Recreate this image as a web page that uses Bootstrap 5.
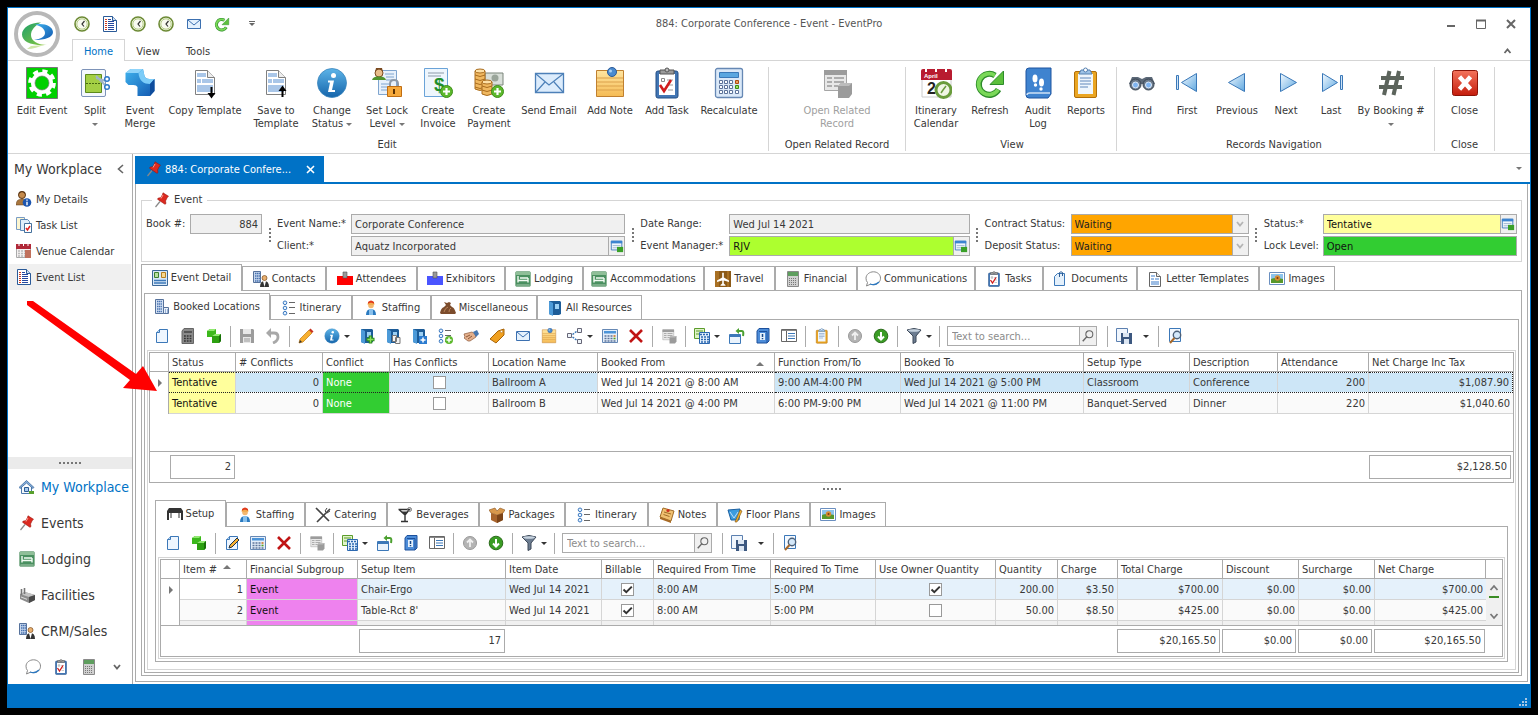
<!DOCTYPE html>
<html lang="en">
<head>
<meta charset="utf-8">
<meta name="viewport" content="width=device-width, initial-scale=1">
<title>884: Corporate Conference - Event - EventPro</title>
<link rel="stylesheet" href="https://cdn.jsdelivr.net/npm/bootstrap@5.3.0/dist/css/bootstrap.min.css">
<style>
:root{--ep-blue:#0072c6;--ep-line:#ababab;--ep-soft:#d5d5d5;--ep-text:#383838}
body{background:#000;font-family:"DejaVu Sans Condensed","Noto Sans",sans-serif;font-size:11px;line-height:13px;color:var(--ep-text);min-height:100vh;padding:7px;display:flex}
button{background:none;border:0;padding:0;color:inherit;font:inherit}
svg{display:block;flex:none}
a{color:inherit;text-decoration:none}
.ic{width:16px;height:16px}
.ic-big{width:32px;height:32px}
.app{border:1px solid var(--ep-blue);background:#fff;min-width:0}
.dots{display:flex;gap:2px;align-items:center;justify-content:center}
.dots i{width:2px;height:2px;background:#777}
.caret{display:inline-block;border:3px solid transparent;border-top-color:#777;border-bottom:0;vertical-align:middle}

/* title bar and ribbon */
.app-head{border-bottom:1px solid var(--ep-soft)}
.logo-cell{width:60px;padding:3px 0 0 6px}
.title-row{height:31px;display:grid;grid-template-columns:1fr auto 1fr;align-items:center}
.app-title{margin-right:60px;color:#555}
.quick button{width:28px;height:24px;display:flex;align-items:center;justify-content:center}
.quick button:last-child{width:32px}
.win button{width:30px;height:24px;display:flex;align-items:center;justify-content:center}
.tab-row{height:21px;margin-left:4px}
.tab-row button{padding:3px 0 0;width:46px;height:21px}
.tab-row .home{width:53px;height:22px;padding-top:2px;border:1px solid var(--ep-soft);border-bottom:0;background:#fff;color:var(--ep-blue)}
.tab-row .tools{width:54px}
.ribbon{height:93px;border-bottom:1px solid var(--ep-soft)}
.rgroup{margin:6px 0 2px;border-right:1px solid var(--ep-soft)}
.rbtns{display:grid;height:71px}
.rbtns button{display:flex;flex-direction:column;align-items:center;white-space:nowrap}
.rbtns button span{padding-top:5px;text-align:center}
.rbtns button:disabled{color:#a0a0a0}
.rcap{text-align:center}
.g-edit{padding:0 7px 0 5px}
.g-edit .rbtns{grid-template-columns:58px 48px 42px 88px 54px 58px 52px 50px 52px 68px 54px 60px 64px}
.g-open .rbtns{grid-template-columns:136px}
.g-view{padding:0 2px 0 4px}
.g-view .rbtns{grid-template-columns:52px 56px 40px 56px}
.g-nav{padding:0 6px 0 3px}
.g-nav .rbtns{grid-template-columns:44px 46px 54px 44px 46px 74px}
.g-close .rbtns{grid-template-columns:59px}

/* left navigation */
.side{width:125px;border-right:1px solid var(--ep-line);flex:none}
.side-title{height:30px;margin-bottom:2px;padding:0 8px 0 6px;font-size:14px}
.side-item{height:26px;padding-left:7px;margin:0 1px;gap:4px}
.side-item.active{background:#f0f0f0}
.side-split{height:12px;background:#ebebeb}
.side-nav{height:36px;padding-left:11px;gap:6px;font-size:14px;white-space:nowrap}
.side-nav.active{color:var(--ep-blue)}
.side-foot{height:35px;padding-left:17px;gap:12px}

/* document area */
.doc-tab{width:189px;height:26px;background:var(--ep-blue);color:#fff;margin-top:2px;padding:0 9px 0 11px;gap:3px}
.doc-strip{border-bottom:2px solid var(--ep-blue);margin-right:-2px}
.doc{margin:0 2px 2px;min-width:0}
.pane{border:1px solid var(--ep-line);border-top:0;padding:7px 5px 5px}
.evt{border:1px solid var(--ep-soft);padding:0 4px 5px;margin-bottom:2px;min-width:0}
.evt legend{float:none;width:auto;font-size:11px;line-height:18px;height:18px;margin:0 0 5px 6px;padding:0 5px 0 2px;display:flex;align-items:center;gap:4px}
.fields{display:grid;grid-template-columns:44px 72fr 15px 74px 274fr 15px 89px 240fr 15px 86px 178fr 15px 59px 194fr;grid-template-rows:20px 20px;row-gap:2px}
.fields label{line-height:20px;white-space:nowrap}
.fields .vdots{grid-row:1 / 3;display:flex;flex-direction:column;gap:2px;align-items:center;justify-content:center}
.fields .at-3{grid-column:3}
.fields .at-6{grid-column:6}
.fields .at-9{grid-column:9}
.fields .at-12{grid-column:12}
.vdots i{width:2px;height:2px;background:#777}
.fbox{display:flex;border:1px solid var(--ep-line);background:#f0f0f0;min-width:0}
.fbox input,.fbox select{border:0;background:none;flex:1 1 0;min-width:0;width:100%;padding:0 3px;font:inherit;color:inherit;appearance:none;outline:0}
.fbox button{width:16px;border-left:1px solid var(--ep-line);background:#f0f0f0;display:flex;align-items:center;justify-content:center;flex:none}
.bg-wait{background:#ffa500;color:#222}
.bg-rjv{background:#adff2f;color:#111}
.bg-tent{background:#ffff9c;color:#111}
.bg-open{background:#32cd32;color:#111}

.tabs{display:grid;height:26px;align-items:end}
.tabs button{height:24px;border:1px solid var(--ep-line);border-bottom:0;display:flex;align-items:center;justify-content:center;gap:3px;white-space:nowrap;background:#fff}
.tabs button.active{height:27px;margin-bottom:-1px;padding-bottom:1px;z-index:1}
.tabs-1{grid-template-columns:101px 84px 91px 88px 78px 121px 71px 82px 118px 68px 94px 122px 76px}
.tabs-2{grid-template-columns:126px 82px 79px 106px 105px}
.tabs-3{grid-template-columns:71px 79px 82px 92px 86px 83px 69px 93px 76px}
.tabs-1,.tabs-2,.tabs-3{margin-left:-1px}
.frame{border:1px solid var(--ep-line)}
.frame-soft{border:1px solid var(--ep-soft);padding:1px}
.frame-a{padding:2px}
.frame-b,.frame-c{padding:0 2px 2px}
.tabs-1,.frame-a .tabs-2,.frame-b .tabs-3{margin-left:0}
.tools-bar{height:30px;display:flex;align-items:center;padding:2px 0 0 2px}
.tools-bar button{width:26px;height:24px;display:flex;align-items:center;justify-content:center;gap:4px;flex:none}
.tools-bar .drop{width:35px}
.tools-bar .drop-only{width:18px}
.tools-bar .drop .caret,.tools-bar .drop-only .caret{border-top-color:#333}
.vsep{width:1px;height:21px;background:var(--ep-line);margin:0 3px;flex:none}
.find{width:150px;height:20px;border:1px solid var(--ep-line);display:flex;margin:0 7px 0 4px;flex:none}
.find input{border:0;padding:0 4px;font:inherit;flex:1 1 0;min-width:0;outline:0}
.find input::placeholder{color:#8c8c8c;opacity:1}
.tools-bar .find button{width:17px;height:18px;border-left:1px solid var(--ep-line);background:#f0f0f0}

/* data grids */
.dgrid{table-layout:fixed;width:100%;border-collapse:separate;border-spacing:0}
.dgrid th{height:19px;font-weight:400;padding:0 0 0 3px;border:0 solid var(--ep-line);border-width:0 1px 1px 0;white-space:nowrap;overflow:hidden}
.dgrid th:last-child,.dgrid td:last-child{border-right:0}
.dgrid td{height:21px;padding:0 3px;border:0 solid var(--ep-soft);border-width:0 1px 1px 0;white-space:nowrap;overflow:hidden}
.dgrid td:first-child{border-color:var(--ep-line);border-bottom:0;background:#fff;padding:0 0 0 8px}
.dgrid .up{display:inline-block;border:4px solid transparent;border-bottom-color:#777;border-top:0;margin:3px 10px 0 6px}
.dgrid .cur{display:block;border:4px solid transparent;border-left-color:#777;border-right:0;width:0}
.dgrid input{appearance:none;width:13px;height:13px;border:1px solid #999;background:#fff;margin:0;display:block}
.dgrid input:checked{background:#fff url("data:image/svg+xml,%3Csvg xmlns='http://www.w3.org/2000/svg' viewBox='0 0 11 11'%3E%3Cpath d='M1.500 5.500l2.800 2.700L9.800 2.600' fill='none' stroke='%23333' stroke-width='2'/%3E%3C/svg%3E")}
.dgrid .alt td:not(:first-child){background:#fafafa}
.dgrid .sel td:not(:first-child){background:#cde6f7;background-clip:padding-box;border-top:1px dotted #222;border-bottom:1px dotted #222}
.dgrid .sel td:last-child{border-right:1px dotted #222}
.dgrid .hot td:not(:first-child){background:#e5f1fb}
.dgrid .third td:not(:first-child){background:#f0f0f0}
.dgrid tr .c-tent.c-tent.c-tent{background:#ffff9c;color:#111}
.dgrid tr .c-none.c-none.c-none{background:#32cd32;color:#fff}
.dgrid tr .c-evt.c-evt.c-evt{background:#ee82ee;color:#111}
.dgrid tr .c-white.c-white.c-white{background:#fff}
.dgrid tr .scroll-cell.scroll-cell.scroll-cell{background:#f0f0f0;border:0;padding:0;vertical-align:top}
.grid-foot{height:30px;display:flex;align-items:center;border-top:1px solid var(--ep-line);box-sizing:content-box}
.grid-foot output{height:24px;border:1px solid var(--ep-line);line-height:22px;padding-right:3px;text-align:right}
.u-count{width:65px;margin-left:20px}
.u-total{width:142px;margin:0 2px 0 auto}
.l-count{width:146px;margin:0 auto 0 198px}
.l-total{width:103px}
.l-small{width:74px;margin-left:2px}
.l-net{width:111px;margin:0 17px 0 2px}
.l-body{height:65px;overflow:hidden}
.split-h{height:12px}
.lower{padding:5px 6px 6px}
.status{height:23px;background:var(--ep-blue);padding:0 3px 1px}
.arrow{position:absolute;left:25px;top:297px;width:132px;height:100px;pointer-events:none}
</style>
</head>
<body>
<svg width="0" height="0" class="position-absolute" aria-hidden="true">
<defs>
<linearGradient id="gb" x1="0" y1="0" x2="1" y2="1"><stop offset="0" stop-color="#f4faff"/><stop offset="1" stop-color="#5fa8e0"/></linearGradient>
<linearGradient id="gi" x1="0" y1="0" x2="0" y2="1"><stop offset="0" stop-color="#5db4e8"/><stop offset="1" stop-color="#1565ab"/></linearGradient>
<linearGradient id="gy" x1="0" y1="0" x2="0" y2="1"><stop offset="0" stop-color="#ffe5a0"/><stop offset="1" stop-color="#f5bb55"/></linearGradient>
<linearGradient id="gr" x1="0" y1="0" x2="0" y2="1"><stop offset="0" stop-color="#f4745c"/><stop offset="1" stop-color="#c41c0c"/></linearGradient>
<linearGradient id="gn" x1="0" y1="0" x2="1" y2="1"><stop offset="0" stop-color="#3fb3ee"/><stop offset="1" stop-color="#1258b0"/></linearGradient>
<linearGradient id="gl" x1="0" y1="0" x2="1" y2="1"><stop offset="0" stop-color="#1da06b"/><stop offset="1" stop-color="#8cc83c"/></linearGradient>
</defs>
<symbol id="gear" viewBox="0 0 32 32"><path d="M.5.500h31v31H.5z" fill="#00d000" stroke="#777"/><circle cx="16" cy="16" r="8.500" fill="none" stroke="#fff" stroke-width="5"/><circle cx="16" cy="16" r="11.800" fill="none" stroke="#fff" stroke-width="4" stroke-dasharray="5 4.270"/><circle cx="16" cy="16" r="7" fill="#00d000" stroke="#777" stroke-width=".7"/></symbol>
<symbol id="split" viewBox="0 0 32 32"><rect x="2.500" y="2.500" width="24" height="27" rx="1.500" fill="#f4f8fd" stroke="#7d93b8"/><path d="M6.500 7.500h16v18h-16z" fill="#a3cf44" stroke="#5d8a1c"/><path d="M7 16.500h15" stroke="#456a12" stroke-dasharray="2 1"/><path d="M17 9l9 9M17 11l10 3" stroke="#9fb4c8" stroke-width="2"/><circle cx="28" cy="12" r="2.300" fill="#fff" stroke="#2e78c8" stroke-width="1.500"/><circle cx="28" cy="20" r="2.300" fill="#fff" stroke="#2e78c8" stroke-width="1.500"/></symbol>
<symbol id="merge" viewBox="0 0 32 32"><path d="M1.500 6l5-4h12.500l1.500 7q1 3 5 3h5v12l-4.500 5H13.500v-9q-1-2-4-2h-5l-3-3z" fill="url(#gn)"/><path d="M1.500 6l5-4h12.500l-4.500 4z" fill="#8fd4fa"/><path d="M14.500 6l4.500-4 1.500 7q1 3 5 3h5l-4.500 5c-6 0-11-3-11.500-11z" fill="#7cccf8"/><path d="M26 17l4.500-5v12L26 29z" fill="#0e4c9c"/></symbol>
<symbol id="tpl" viewBox="0 0 32 32"><path d="M6.500 3.500h12l7 7v17h-19z" fill="#fff" stroke="#808080"/><path d="M18.500 3.500v7h7" fill="#eee" stroke="#808080"/><path d="M8 6h9v4H8zM8 12h4v4H8zM13 12h11v4H13zM8 18h16v7H8z" fill="#a9c6e8"/></symbol>
<symbol id="tpls" viewBox="0 0 16 16"><path d="M2.500 1.500h7l4 4v10h-11z" fill="#fff" stroke="#666"/><path d="M9.500 1.500v4h4" fill="#eee" stroke="#666"/><path d="M4 4h4v2H4zM4 7h3v2H4zM8 7h4v2H8zM4 10h8v4H4z" fill="#9dbde4"/></symbol>
<symbol id="copytpl" viewBox="0 0 32 32"><use href="#tpl"/><path d="M22.500 20v8" stroke="#000" stroke-width="2"/><path d="M18.500 26h8l-4 5.500z"/></symbol>
<symbol id="savetpl" viewBox="0 0 32 32"><use href="#tpl"/><path d="M22.500 22v8" stroke="#000" stroke-width="2"/><path d="M18.500 24h8l-4-5.500z"/></symbol>
<symbol id="info" viewBox="0 0 32 32"><circle cx="16" cy="16" r="14.500" fill="url(#gi)" stroke="#3c86bd" stroke-width=".8"/><circle cx="17.500" cy="8.500" r="2.500" fill="#fff"/><path d="M12 13.500h6l-2 9.500h3v2h-7l2-9.500h-2z" fill="#fff"/></symbol>
<symbol id="lock" viewBox="0 0 32 32"><path d="M7.500 3.500h18v24h-18z" fill="#e8f1fb" stroke="#7fa5cf"/><path d="M14 7h9M15 10h8M15 13h8M10 17h10M10 20h8M10 23h8" stroke="#7fa5cf" stroke-width="1"/><circle cx="8" cy="6" r="4" fill="#e8bd8a" stroke="#7a4a20"/><path d="M4 5q4-6 8 0l-1-4H5z" fill="#7a4a20"/><path d="M1 13q1-4 7-3.500 6-.5 7 3.500z" fill="#50942e"/><path d="M19 20v-3q0-4 4-4t4 4v3" fill="none" stroke="#8d99a8" stroke-width="2"/><path d="M16.500 19.500h14v10h-14z" fill="#f7a93a" stroke="#c06d12"/><path d="M23 22v5" stroke="#5c3000" stroke-width="2"/></symbol>
<symbol id="invoice" viewBox="0 0 32 32"><path d="M2.500 1.500h23v28h-23z" fill="#eef6fd" stroke="#6aa3d8"/><path d="M6 6h16M6 9h13" stroke="#8c9aa8"/><text x="12" y="24" font-family="Liberation Sans" font-size="19" font-weight="700" fill="#1f8f2a">$</text><circle cx="24.500" cy="24.500" r="6" fill="#5cb82c" stroke="#3d8f18"/><path d="M24.500 21v7M21 24.500h7" stroke="#fff" stroke-width="2.200"/></symbol>
<symbol id="payment" viewBox="0 0 32 32"><path d="M12 6h18v12H12z" fill="#d9dfd9" stroke="#7b857b"/><circle cx="22" cy="11" r="3.500" fill="#9aa59a"/><path d="M2 4v18q5 3 10 0V4z" fill="#f0b860" stroke="#a96c1e"/><path d="M2 8q5 3 10 0M2 12q5 3 10 0M2 16q5 3 10 0M2 20q5 3 10 0" fill="none" stroke="#a96c1e"/><ellipse cx="7" cy="4" rx="5" ry="2" fill="#fde0a6" stroke="#a96c1e"/><path d="M9 15v12q5 3 10 0V15z" fill="#f0b860" stroke="#a96c1e"/><path d="M9 19q5 3 10 0M9 23q5 3 10 0" fill="none" stroke="#a96c1e"/><ellipse cx="14" cy="15" rx="5" ry="2" fill="#fde0a6" stroke="#a96c1e"/><circle cx="24.500" cy="24.500" r="6" fill="#5cb82c" stroke="#3d8f18"/><path d="M24.500 21v7M21 24.500h7" stroke="#fff" stroke-width="2.200"/></symbol>
<symbol id="mail" viewBox="0 0 32 32"><path d="M2.500 6.500h28v19h-28z" fill="#dcecfc" stroke="#4d80b8" stroke-width="1.300"/><path d="M3 7l13 11L30 7M3 25l9-10M30 25l-9-10" fill="none" stroke="#4d80b8" stroke-width="1.200"/></symbol>
<symbol id="mails" viewBox="0 0 16 16"><path d="M1.500 3.500h13v9h-13z" fill="#e4f1fd" stroke="#3c70b0"/><path d="M2 4l6 5 6-5" fill="none" stroke="#3c70b0"/></symbol>
<symbol id="note" viewBox="0 0 32 32"><path d="M2.500 3.500h27v26h-27z" fill="url(#gy)" stroke="#c08030"/><path d="M3 11h26M3 15h26M3 19h26M3 23h26" stroke="#dba04a"/><circle cx="18" cy="5" r="4.500" fill="#4b8bd0" stroke="#2a5a98"/><circle cx="16.500" cy="4" r="1.500" fill="#a9d0f4"/></symbol>
<symbol id="task" viewBox="0 0 32 32"><rect x="5" y="4" width="22" height="27" rx="2" fill="#4276b4" stroke="#234f86"/><path d="M8 7h16v21H8z" fill="#fff"/><path d="M9 3h14v4H9z" fill="#9a9a9a" stroke="#555"/><circle cx="16" cy="3" r="2" fill="#bbb" stroke="#555"/><path d="M10.500 11.500h3v3h-3z" fill="none" stroke="#888"/><path d="M16 13h6M17 18h5M17 23h5" stroke="#999"/><path d="M9 18l4 6 7-11" fill="none" stroke="#d01c1c" stroke-width="2.600"/></symbol>
<symbol id="calc" viewBox="0 0 32 32"><rect x="2.500" y="1.500" width="27" height="29" rx="2" fill="#dbe9f8" stroke="#6688b4" stroke-width="1.300"/><path d="M6.500 5.500h19v5h-19z" fill="#5aa7e0" stroke="#3a79b8"/><g fill="#fff" stroke="#5c7399"><path d="M6.500 13.500h3v3h-3zM11.500 13.500h3v3h-3zM16.500 13.500h3v3h-3zM6.500 18.500h3v3h-3zM11.500 18.500h3v3h-3zM16.500 18.500h3v3h-3zM6.500 23.500h3v3h-3zM11.500 23.500h3v3h-3zM16.500 23.500h3v3h-3zM22.500 23.500h3v3h-3z"/><path d="M22.500 13.500h3v3h-3z" fill="#e8a060" stroke="#b04a10"/><path d="M22.500 18.500h3v3h-3z" fill="#a0e060" stroke="#3c8c10"/></g></symbol>
<symbol id="calcs" viewBox="0 0 16 16"><path d="M.5 1.500h15v13H.5z" fill="#e4eefa" stroke="#6688b4"/><path d="M2 3h12v2.500H2z" fill="#4c94d8"/><path d="M2.500 8h8M2.500 10.500h8M2.500 13h11" stroke="#5c7399" stroke-width="1.500" stroke-dasharray="2 1"/><path d="M11.500 7.200h2v1.600h-2z" fill="#d07020"/><path d="M11.500 9.700h2v1.600h-2z" fill="#55a01c"/></symbol>
<symbol id="openrel" viewBox="0 0 32 32"><path d="M3.500 3.500h22v20h-22z" fill="#e8e8e8" stroke="#a5a5a5"/><path d="M3 3h23v5H3z" fill="#9c9c9c"/><path d="M6 11h5M13 11h10M6 15h5M13 15h10M6 19h5M13 19h4" stroke="#999" stroke-width="1.500"/><path d="M17 19l3-3h11v11l-3 4H17z" fill="#9b9b9b"/><path d="M17 19l3-3h11l-3 3z" fill="#bcbcbc"/></symbol>
<symbol id="itincal" viewBox="0 0 32 32"><path d="M2 12h29v18H2z" fill="#fff" stroke="#ccc"/><path d="M1 4q0-2 2-2h27q2 0 2 2v9H1z" fill="#b81c30"/><path d="M6 0v5M16 0v5M26 0v5" stroke="#fff" stroke-width="2"/><text x="4" y="11" font-family="Liberation Sans" font-size="6" font-weight="700" fill="#fff">April</text><text x="7" y="27" font-family="Liberation Sans" font-size="16" font-weight="700" fill="#222">2</text><circle cx="23.500" cy="23" r="7.500" fill="#f0f6e4" stroke="#6a9c3c" stroke-width="3"/><path d="M23 23l3-4M23 23l-2 3" stroke="#6a9c3c" stroke-width="1.500"/></symbol>
<symbol id="refresh" viewBox="0 0 32 32"><path d="M24.500 22.500A10.500 10.500 0 1 1 21 8.500" fill="none" stroke="#2d8c2a" stroke-width="6"/><path d="M24 22.800A10.500 10.500 0 1 1 21 8.500" fill="none" stroke="#7ad858" stroke-width="3.800"/><path d="M29.500 4v13.500H16z" fill="#5cc03c" stroke="#2d8c2a"/></symbol>
<symbol id="audit" viewBox="0 0 32 32"><path d="M4 4q0-3 3-3h22v26l-3 4H7q-3 0-3-3z" fill="#3f83cf" stroke="#1e55a0"/><path d="M5 28q0-2 3-2h20" fill="none" stroke="#cfe2f6" stroke-width="1.500"/><ellipse cx="13" cy="11.500" rx="2.500" ry="4" fill="#fff"/><circle cx="13.500" cy="18" r="1.700" fill="#fff"/><ellipse cx="19.500" cy="15.500" rx="2.500" ry="4" fill="#fff"/><circle cx="19" cy="22" r="1.700" fill="#fff"/></symbol>
<symbol id="report" viewBox="0 0 32 32"><rect x="4.500" y="4.500" width="22" height="26" rx="1.500" fill="#eaa522" stroke="#b06e08"/><path d="M8 7h15v20H8z" fill="#eff6fd"/><path d="M9 7l2-4h9l2 4z" fill="#9ec3e8" stroke="#5580b0"/><circle cx="15.500" cy="3" r="2" fill="#fff" stroke="#5580b0"/><path d="M10 11h11M10 14h11M10 17h11M10 20h8" stroke="#6088bb"/></symbol>
<symbol id="find" viewBox="0 0 32 32"><path d="M6 10h6l4 2 4-2h6l3 7H3z" fill="#5c6978"/><circle cx="9.500" cy="17.500" r="5.500" fill="#6a7888" stroke="#394450"/><circle cx="22.500" cy="17.500" r="5.500" fill="#6a7888" stroke="#394450"/><circle cx="9.500" cy="18" r="3" fill="#7fb4f0" stroke="#e0ecfa"/><circle cx="22.500" cy="18" r="3" fill="#7fb4f0" stroke="#e0ecfa"/></symbol>
<symbol id="prev" viewBox="0 0 32 32"><path d="M7.500 15.500L23.500 6.500v18z" fill="url(#gb)" stroke="#3a78b8"/></symbol>
<symbol id="next" viewBox="0 0 32 32"><path d="M26.500 15.500L10.500 6.500v18z" fill="url(#gb)" stroke="#3a78b8"/></symbol>
<symbol id="first" viewBox="0 0 32 32"><path d="M10.500 15.500l15-9v18z" fill="url(#gb)" stroke="#3a78b8"/><path d="M5.500 8.500h2v14h-2z" fill="#cfe4f8" stroke="#3a78b8"/></symbol>
<symbol id="last" viewBox="0 0 32 32"><path d="M22.500 15.500l-15-9v18z" fill="url(#gb)" stroke="#3a78b8"/><path d="M25.500 8.500h2v14h-2z" fill="#cfe4f8" stroke="#3a78b8"/></symbol>
<symbol id="hash" viewBox="0 0 32 32"><path d="M14.500 4L9 28M24 4l-5.500 24M6 11h23M4 20h23" stroke="#5c645c" stroke-width="4" fill="none"/></symbol>
<symbol id="closex" viewBox="0 0 32 32"><rect x="3.500" y="3.500" width="25" height="25" rx="2" fill="url(#gr)" stroke="#8c1408"/><path d="M12 11.500l8 9M20 11.500l-8 9" stroke="#fff" stroke-width="4.500" stroke-linecap="square"/></symbol>

<symbol id="clock" viewBox="0 0 16 16"><circle cx="8" cy="8" r="7" fill="#f8faf0" stroke="#6c8a34" stroke-width="1.600"/><circle cx="8" cy="8" r="5.200" fill="none" stroke="#b4cc84"/><path d="M10.500 5L8 8l2 2.500" fill="none" stroke="#333" stroke-width="1.200"/></symbol>
<symbol id="doclist" viewBox="0 0 16 16"><path d="M1.500.500h9l4 4v11h-13z" fill="#fff" stroke="#2a5a98"/><path d="M10.500.500v4h4" fill="#cfe0f4" stroke="#2a5a98"/><path d="M6 3.500h3M6 5.500h6M6 7.500h6M6 9.500h6M6 11.500h6M6 13.500h6" stroke="#2448a0"/><path d="M3 3.500h2M3 5.500h2M3 7.500h2M3 9.500h2M3 11.500h2M3 13.500h2" stroke="#d03c1c"/></symbol>
<symbol id="pin" viewBox="0 0 16 16"><path d="M6 9.500L1.500 15" stroke="#888" stroke-width="1.200"/><path d="M9 .8l5.500 3.500-1.300 1.200L11.500 9l.5 2.500-1 .8L3.500 7.200l.8-1.200 2.500-.3L8.500 2.500z" fill="#dc2a20" stroke="#9c1008" stroke-width=".6"/><path d="M9 3l-2 3.500" stroke="#ff9a90"/></symbol>
<symbol id="personinfo" viewBox="0 0 16 16"><circle cx="6" cy="4" r="3.500" fill="#c48a4c" stroke="#5f3a18"/><path d="M2.500 3.500q3.500-5 7 0L9 1 6 0 3 1z" fill="#5f3a18"/><path d="M0 14q0-6 6-6t6 6z" fill="#a8763e" stroke="#5f3a18" stroke-width=".5"/><circle cx="11" cy="11.500" r="4.300" fill="#1c56b0"/><path d="M11 8.500v1.300M11 10.800v3.400" stroke="#fff" stroke-width="1.400"/></symbol>
<symbol id="tasklist" viewBox="0 0 16 16"><path d="M.5.500h8v12h-8z" fill="#fdf6d0" stroke="#7a9cc4"/><path d="M4.500 2.500h7l2 2v9h-9z" fill="#e0edf9" stroke="#5c88b8"/><path d="M8.500 6.500h7v9h-7z" fill="#fff" stroke="#44709c"/><path d="M10 11l1.500 2 2.500-4" stroke="#d22" fill="none" stroke-width="1.500"/></symbol>
<symbol id="venuecal" viewBox="0 0 16 16"><path d="M.5 2.500h14v12H.5z" fill="#f4f0f0" stroke="#aaa"/><path d="M0 1h15v5H0z" fill="#b02838"/><path d="M3 0v3M7.500 0v3M12 0v3" stroke="#fff"/><path d="M2 8h7M2 10.500h7M2 13h7" stroke="#bbb" stroke-dasharray="2 1" stroke-width="1.500"/><path d="M9 7h6v8H9z" fill="#c0705c"/></symbol>
<symbol id="house" viewBox="0 0 16 16"><path d="M2.500 8v6.500h10V8" fill="#f4f8fc" stroke="#4c78ac"/><path d="M0 8.500L7.500 1.500 15 8.500l-1 1L7.500 4 1 9.500z" fill="#88b0dc" stroke="#3a689c" stroke-width=".8"/><path d="M5.500 8.500h4v4h-4z" fill="#a8cbee" stroke="#2c5c94"/><path d="M10 12h5v3h-5z" fill="#58a02c"/></symbol>
<symbol id="bed" viewBox="0 0 16 16"><rect x=".5" y=".5" width="15" height="15" rx="1.500" fill="#4a9060" stroke="#8fb89a"/><path d="M1 1h14v3H1z" fill="#8fbf98"/><path d="M3 5v6.500M13 7v4.500M3 9.500h10M5 7h8" stroke="#f4fcf4" stroke-width="1.400"/><path d="M1.500 14h13" stroke="#a8c8ae"/></symbol>
<symbol id="factory" viewBox="0 0 16 16"><path d="M1 7l5-2 10 3v5l-6 3-9-4z" fill="#8c8c8c"/><path d="M1 7l9 3 6-2-10-3z" fill="#c4c4c4"/><path d="M10 10v6l6-3V8z" fill="#4a4a4a"/><path d="M2.500 2v6M5.500 1v6" stroke="#777" stroke-width="1.600"/><path d="M2 10l6 2.300" stroke="#ddd"/></symbol>
<symbol id="building" viewBox="0 0 16 16"><path d="M1.500.500h8v14h-8z" fill="#d4e2f4" stroke="#56729c"/><path d="M3 2.500h5M3 5h5M3 7.500h5M3 10h5M3 12.500h5" stroke="#4872b0" stroke-width="1.500" stroke-dasharray="1.300 .5"/><path d="M9.500 8.500h5v6h-5z" fill="#e8f0fa" stroke="#56729c"/><path d="M11 11h1M13 11h1M11 13h1M13 13h1" stroke="#4872b0"/></symbol>
<symbol id="crm" viewBox="0 0 16 16"><path d="M.5.500h7v11h-7z" fill="#c8d8ee" stroke="#56729c"/><path d="M2 2.500h5M2 5h5M2 7.500h5M2 10h5" stroke="#4872b0" stroke-width="1.400" stroke-dasharray="1.300 .5"/><circle cx="11.500" cy="7" r="2.500" fill="#e8b070" stroke="#7a4a1c" stroke-width=".7"/><path d="M7 16q0-6 4.500-6t4.500 6z" fill="#333"/><path d="M10 10h3l-1.500 6z" fill="#fff"/></symbol>
<symbol id="chat" viewBox="0 0 16 16"><path d="M8.500.800c4 0 7 2.800 7 6.400s-3 6.500-7 6.500q-1.500 0-3-.5L1.500 15l1-3.500Q1 10 1 7.200c0-3.600 3.500-6.400 7.500-6.400z" fill="#fff" stroke="#888"/><path d="M5 13q5 2 9-2" fill="none" stroke="#2c78c0" stroke-width="1.300"/></symbol>
<symbol id="calcg" viewBox="0 0 16 16"><path d="M2.500.500h11v15h-11z" fill="#d0d0d0" stroke="#8a8a8a"/><path d="M3 1h10v4H3z" fill="#5e9e5e"/><path d="M4 7.500h8M4 9.500h8M4 11.500h8M4 13.500h8" stroke="#777" stroke-dasharray="1 1"/></symbol>
<symbol id="calcd" viewBox="0 0 16 16"><path d="M2 3l2-2.500h9.500v15H2z" fill="#8a8a8a" stroke="#666"/><path d="M4 3h8v2H4z" fill="#555"/><path d="M4 8h8M4 10.500h8M4 13h8" stroke="#333" stroke-dasharray="1.800 1" stroke-width="1.600"/></symbol>
<symbol id="detail" viewBox="0 0 16 16"><path d="M.5.500h15v15H.5z" fill="#d8e8f8" stroke="#3c6898"/><path d="M2.500 2.500h4v5h-4z" fill="#b8e0a0" stroke="#3c8030"/><path d="M9.500 2.500h4v5h-4z" fill="#f8d890" stroke="#b88020"/><path d="M2 10.500h12M2 13h12" stroke="#3c78b8" stroke-width="1.500"/></symbol>
<symbol id="badgeic" viewBox="0 0 16 16"><path d="M0 5h16v9H0z" fill="currentColor"/><path d="M6 1h4v6H6z" fill="#999" stroke="#555" stroke-width=".6"/></symbol>
<symbol id="plane" viewBox="0 0 16 16"><path d="M0 0h16v16H0z" fill="#8c5a18"/><path d="M0 0h4v16H0zM12 0h2v16h-2z" fill="#a87024"/><path d="M7.200 2q.8-1 1.600 0v4.500L14 9.500V11L8.800 9.500v3L10.500 14v.8h-5V14l1.700-1.500v-3L2 11V9.500l5.200-3z" fill="#fff"/></symbol>
<symbol id="docclip" viewBox="0 0 16 16"><path d="M5.500 2.500h7v12h-10v-9z" fill="#e4f0fb" stroke="#3c78b8"/><path d="M7.500 6V1.500q1.500-1.500 3 0V5" fill="none" stroke="#2c5c94"/></symbol>
<symbol id="pic" viewBox="0 0 16 16"><path d="M.5 1.500h15v12H.5z" fill="#fff" stroke="#6a8fc0"/><path d="M2 3h12v9H2z" fill="#8cc4ec"/><path d="M2 8q4-2 12 0v4H2z" fill="#58982c"/><circle cx="8.500" cy="7" r="2.700" fill="#d88c34"/><circle cx="8.500" cy="7" r="1" fill="#7a3a10"/></symbol>
<symbol id="itin" viewBox="0 0 16 16"><g fill="#e8f4ff" stroke="#3a78c0"><circle cx="4" cy="2.800" r="1.800"/><circle cx="4" cy="8" r="1.800"/><circle cx="4" cy="13.200" r="1.800"/></g><path d="M8 2.500h6M8 7.500h6M8 13.500h6" stroke="#666"/></symbol>
<symbol id="itinplus" viewBox="0 0 16 16"><use href="#itin"/><circle cx="12" cy="12" r="4" fill="#5cb82c"/><path d="M12 9.500v5M9.500 12h5" stroke="#fff" stroke-width="1.500"/></symbol>
<symbol id="staff" viewBox="0 0 16 16"><path d="M5 2q3-3 6 0v2H5z" fill="#e03c1c"/><circle cx="8" cy="5.500" r="2.800" fill="#f4b870"/><path d="M3 15q0-6 5-6t5 6z" fill="#2a7ac0"/><path d="M6 9h4v6H6z" fill="#88c0ec"/><path d="M4.500 4h7" stroke="#f0a030"/></symbol>
<symbol id="sack" viewBox="0 0 16 16"><path d="M6 5L4 2l3 1 2-1 2 1-1 2 2 2q2 0 4 6l-1 1H1l-1-1q1-5 4-6z" fill="#7c4c2c"/><path d="M4 12q1-4 4-5M9 12q0-3 2-4" stroke="#b8845a" fill="none"/></symbol>
<symbol id="book" viewBox="0 0 16 16"><path d="M2 1h11l1 1v12l-2 1H4l-2-1z" fill="#1c5c98"/><path d="M2 1l4 2v13l-4-2z" fill="#4c9ad8"/><path d="M8 4h4v5H8z" fill="#9cd0f4"/></symbol>
<symbol id="bookplus" viewBox="0 0 16 16"><use href="#book"/><path d="M11.500 7.500v8M7.500 11.500h8" stroke="#2c8c1c" stroke-width="3.500"/><path d="M11.500 8.500v6M8.500 11.500h6" stroke="#8ce05c" stroke-width="1.300"/></symbol>
<symbol id="bookcopy" viewBox="0 0 16 16"><use href="#book"/><path d="M7.500 7.500h4v6h-4zM10.500 9.500h4.500v6h-4.500z" fill="#f4f4f4" stroke="#777"/></symbol>
<symbol id="bookblue" viewBox="0 0 16 16"><use href="#book"/><path d="M8 8h8v8H8z" fill="#2c7cd0"/><path d="M12 9.500v5M9.500 12h5" stroke="#fff" stroke-width="1.500"/></symbol>
<symbol id="newdoc" viewBox="0 0 16 16"><path d="M5.500 1.500h8v13h-11v-10z" fill="#eef6ff" stroke="#3c78b8"/><path d="M5.500 1.500v3h-3" fill="#bcd8f4" stroke="#3c78b8"/></symbol>
<symbol id="cubes" viewBox="0 0 16 16"><path d="M1 3l3-2h6v6L8 9H1z" fill="#3cb81c"/><path d="M1 3l3-2h6L8 3z" fill="#90e870"/><path d="M6 8l3-2h6v7l-2 2H6z" fill="#2ca010"/><path d="M6 8l3-2h6l-2 2z" fill="#90e870"/><path d="M13 8l2-2v7l-2 2z" fill="#187008"/></symbol>
<symbol id="saveg" viewBox="0 0 16 16"><path d="M1 1h13l1 1v13H1z" fill="#9c9c9c"/><path d="M4 1h8v5H4zM4 9h8v6H4z" fill="#e8e8e8"/><path d="M5 11h6M5 13h6" stroke="#999"/></symbol>
<symbol id="undo" viewBox="0 0 16 16"><path d="M4 5h5q4 0 4 4 0 4-5 6" fill="none" stroke="#a8a8a8" stroke-width="2.800"/><path d="M6 0v10L1 5z" fill="#a8a8a8"/></symbol>
<symbol id="pencil" viewBox="0 0 16 16"><path d="M1 15l1-4 9-9 3 3-9 9z" fill="#f8b030" stroke="#c07810" stroke-width=".7"/><path d="M11 2l1.500-1.500 3 3L14 5z" fill="#c83020"/><path d="M1 15l1-3 2 2z" fill="#333"/></symbol>
<symbol id="hands" viewBox="0 0 16 16"><path d="M1 6l4-1 4-1 3 2 1 3-6 4-2 0-4-3 1-1z" fill="#e4b08c" stroke="#8c5838" stroke-width=".7"/><path d="M10 4l4-2 2 4-3 3z" fill="#4878b0"/><path d="M3 9l4-2M5 11l4-3" stroke="#8c5838"/></symbol>
<symbol id="tag" viewBox="0 0 16 16"><path d="M1 11L9 3l6-2 0 6-8 8z" fill="#f0a020" stroke="#a86408"/><circle cx="12.500" cy="3.500" r="1.200" fill="#fff" stroke="#a86408" stroke-width=".6"/></symbol>
<symbol id="share" viewBox="0 0 16 16"><path d="M10.500.500h4v4h-4zM.5 5.500h4v4h-4zM10.500 11.500h4v4h-4z" fill="#eef4fa" stroke="#667"/><path d="M5.500 6.500l4-3M5.500 9l4 3" stroke="#3c78b8" stroke-dasharray="2 1" stroke-width="1.500"/></symbol>
<symbol id="redx" viewBox="0 0 16 16"><path d="M2 2l12 12M14 2L2 14" stroke="#c01414" stroke-width="2.600"/></symbol>
<symbol id="coltable" viewBox="0 0 16 16"><path d="M.5.500h10v10H.5z" fill="#e0f4c8" stroke="#5c9c2c"/><path d="M2 3h7M2 6h7" stroke="#5c9c2c"/><path d="M5.500 4.500h10v11h-10z" fill="#e4f0fc" stroke="#2c68b0"/><path d="M6 6.500h9M7 9h8M7 11.500h8M7 14h8" stroke="#2c68b0" stroke-dasharray="2 1" stroke-width="1.500"/></symbol>
<symbol id="winarrow" viewBox="0 0 16 16"><path d="M.5 6.500h11v9H.5z" fill="#eaf3fc" stroke="#3c78b8"/><path d="M1 7h11v2H1z" fill="#3c78b8"/><path d="M8 3h5q2 0 1 5" fill="none" stroke="#4ca030" stroke-width="2"/><path d="M10 0v6L6.500 3z" fill="#4ca030"/></symbol>
<symbol id="helpbook" viewBox="0 0 16 16"><path d="M2 3l2-2.500h10V13l-2 2H2z" fill="#4c8cd8" stroke="#1c509c"/><path d="M4 3.500h8V15" fill="none" stroke="#1c509c"/><path d="M5 5h5v7H5z" fill="#e4f0fc"/><path d="M7.500 6v3M7.500 10v1.200" stroke="#184888" stroke-width="1.500"/></symbol>
<symbol id="panes" viewBox="0 0 16 16"><path d="M.5 1.500h15v12H.5z" fill="#fff" stroke="#666"/><path d="M1 2h14v1H1z" fill="#888"/><path d="M5.500 3v11" stroke="#666"/><path d="M7 5.500h7M7 8h7M7 10.500h7" stroke="#3c78b8"/></symbol>
<symbol id="upg" viewBox="0 0 16 16"><circle cx="8" cy="8" r="6.500" fill="#b4b4b4" stroke="#999"/><path d="M8 12V5M5 7.500l3-3 3 3" fill="none" stroke="#f0f0f0" stroke-width="1.800"/></symbol>
<symbol id="downg" viewBox="0 0 16 16"><circle cx="8" cy="8" r="6.800" fill="#3a9c24" stroke="#2c6c1c"/><path d="M8 4v7M5 8.500l3 3 3-3" fill="none" stroke="#fff" stroke-width="2"/></symbol>
<symbol id="filter" viewBox="0 0 16 16"><path d="M1 2q7-3 14 0L10 8v6l-3 1.500V8z" fill="#6c7c90" stroke="#3c4858"/><ellipse cx="8" cy="2.500" rx="6" ry="1.300" fill="#c8d4e0"/></symbol>
<symbol id="savedoc" viewBox="0 0 16 16"><path d="M.5.500h11v13H.5z" fill="#f0f6fd" stroke="#5c80b0"/><path d="M5 5h11v11H5z" fill="#3c5880"/><path d="M7 5h6v4H7zM8 11h5v5H8z" fill="#dce6f2"/></symbol>
<symbol id="preview" viewBox="0 0 16 16"><path d="M2.500.500h11v13h-11z" fill="#f4f9ff" stroke="#3c78b8"/><circle cx="10" cy="7" r="3.700" fill="#d4e8fa" stroke="#4c6078" stroke-width="1.400"/><path d="M7.500 10L3 15" stroke="#a86828" stroke-width="2"/></symbol>
<symbol id="docedit" viewBox="0 0 16 16"><use href="#newdoc"/><path d="M5 13l1-3 7-7 2 2-7 7z" fill="#f8b030" stroke="#234"/></symbol>
<symbol id="tableic" viewBox="0 0 16 16"><path d="M0 5l2-3h12l2 3v9h-2V7H2v7H0z" fill="#333"/><path d="M4 7v5M12 7v5" stroke="#333"/></symbol>
<symbol id="cutlery" viewBox="0 0 16 16"><path d="M1 1l13 13M15 2L2 15" stroke="#444" stroke-width="1.700"/><path d="M12 1l-2 3 2 2 3-2" fill="none" stroke="#444"/></symbol>
<symbol id="cocktail" viewBox="0 0 16 16"><path d="M1.500 2.500h11L8 8v6M4 14.500h7M8 8L2 2.500" fill="none" stroke="#333" stroke-width="1.400"/><path d="M4 4.500h7L8 8z" fill="#333"/><circle cx="12.500" cy="2.500" r="2" fill="none" stroke="#777"/></symbol>
<symbol id="boxic" viewBox="0 0 16 16"><path d="M2 6l6 2 6-2v7l-6 3-6-3z" fill="#a8642c"/><path d="M8 8v8l6-3V6z" fill="#7c4418"/><path d="M2 6L0 3l6-2 2 3 3-3 5 2-2 3-6 2z" fill="#d8984c" stroke="#8c5420" stroke-width=".6"/></symbol>
<symbol id="notesic" viewBox="0 0 16 16"><path d="M4 1l11 3-3 10L1 10z" fill="#f0c070" stroke="#a06c28"/><path d="M1 10l11 4v2L1 12z" fill="#a86a24"/><path d="M5 5l7 2M4.500 7.500l6 2" stroke="#a06c28"/><circle cx="9" cy="3.500" r="1.600" fill="#d03020"/></symbol>
<symbol id="floor" viewBox="0 0 16 16"><path d="M1 3l12-1-1 11H4z" fill="#3c9ce0" stroke="#1c60a0"/><path d="M3 5l4 6 4-6" stroke="#bfe0fa" fill="none"/><path d="M8 15l5-12 2 1-5 11z" fill="#f0b030" stroke="#805010" stroke-width=".6"/></symbol>
<symbol id="mag" viewBox="0 0 16 16"><circle cx="9.500" cy="6" r="4" fill="none" stroke="#666" stroke-width="1.200"/><path d="M6.500 9L2 14" stroke="#666" stroke-width="1.700"/></symbol>
<symbol id="lookup" viewBox="0 0 16 16"><path d="M1.500 2.500h12v10h-12z" fill="#f0f6fc" stroke="#3c78b8"/><path d="M1 2h13v3H1z" fill="#3c84d0"/><path d="M3 7.500h9M3 10h5" stroke="#9ab4d0"/><path d="M8 9h7v6H8z" fill="#3aa028"/></symbol>
<symbol id="chev" viewBox="0 0 8 8"><path d="M1 2l3 3.500L7 2" fill="none" stroke="currentColor" stroke-width="1.800"/></symbol>
</svg>

<div class="app flex-grow-1 d-flex flex-column">
  <header class="app-head d-flex">
    <div class="logo-cell">
      <svg width="46" height="46" viewBox="0 0 46 46" role="img" aria-label="EventPro"><circle cx="23" cy="23" r="21" fill="#fff" stroke="#b8b8b8" stroke-width="4"/><path d="M27 11.500C16 11.500 8 17 8 23.500c0 7 9 11.500 25 10.500-10 0-16-4.500-16-10 0-5 4-9.500 10-12.500z" fill="url(#gl)"/><path d="M21 13.500c9-2 18 2 18 7.500s-8 8-19 8c7-1 11-3.500 11-7 0-4-4-7-10-8.500z" fill="url(#gn)"/><path d="M13 38q9 0 18-5-6 2-14 2z" fill="#cfe6a8"/></svg>
    </div>
    <div class="flex-grow-1">
      <div class="title-row">
        <div class="quick d-flex">
          <button aria-label="Recent"><svg class="ic"><use href="#clock"/></svg></button>
          <button aria-label="Event list"><svg class="ic"><use href="#doclist"/></svg></button>
          <button aria-label="Schedule"><svg class="ic"><use href="#clock"/></svg></button>
          <button aria-label="Timeline"><svg class="ic"><use href="#clock"/></svg></button>
          <button aria-label="Email"><svg class="ic"><use href="#mails"/></svg></button>
          <button aria-label="Refresh"><svg class="ic"><use href="#refresh"/></svg></button>
          <button aria-label="Customize"><svg width="6" height="6"><path d="M0 .500h6" stroke="#666"/><path d="M0 2h6L3 5z" fill="#666"/></svg></button>
        </div>
        <div class="app-title">884: Corporate Conference - Event - EventPro</div>
        <div class="win d-flex justify-content-end pe-1">
          <button aria-label="Minimize"><svg width="10" height="10"><path d="M1 7h8" stroke="#666" stroke-width="2"/></svg></button>
          <button aria-label="Maximize"><svg width="10" height="10"><path d="M.5 1.500h9v8h-9z" fill="none" stroke="#666"/><path d="M0 1.500h10" stroke="#666" stroke-width="2"/></svg></button>
          <button aria-label="Close window"><svg width="10" height="10"><path d="M1 1l8 8M9 1L1 9" stroke="#666" stroke-width="2"/></svg></button>
        </div>
      </div>
      <div class="tab-row d-flex">
        <button class="home">Home</button><button>View</button><button class="tools">Tools</button>
        <button class="ms-auto d-flex align-items-center justify-content-center" aria-label="Collapse ribbon"><svg width="9" height="8" viewBox="0 0 8 8"><path d="M1 6l3-3.500L7 6" fill="none" stroke="#666" stroke-width="1.800"/></svg></button>
      </div>
    </div>
  </header>

  <div class="ribbon d-flex">
    <section class="rgroup g-edit">
      <div class="rbtns">
        <button><svg class="ic-big"><use href="#gear"/></svg><span>Edit Event</span></button>
        <button><svg class="ic-big"><use href="#split"/></svg><span>Split<br><i class="caret"></i></span></button>
        <button><svg class="ic-big"><use href="#merge"/></svg><span>Event<br>Merge</span></button>
        <button><svg class="ic-big"><use href="#copytpl"/></svg><span>Copy Template</span></button>
        <button><svg class="ic-big"><use href="#savetpl"/></svg><span>Save to<br>Template</span></button>
        <button><svg class="ic-big"><use href="#info"/></svg><span>Change<br>Status <i class="caret"></i></span></button>
        <button><svg class="ic-big"><use href="#lock"/></svg><span>Set Lock<br>Level <i class="caret"></i></span></button>
        <button><svg class="ic-big"><use href="#invoice"/></svg><span>Create<br>Invoice</span></button>
        <button><svg class="ic-big"><use href="#payment"/></svg><span>Create<br>Payment</span></button>
        <button><svg class="ic-big"><use href="#mail"/></svg><span>Send Email</span></button>
        <button><svg class="ic-big"><use href="#note"/></svg><span>Add Note</span></button>
        <button><svg class="ic-big"><use href="#task"/></svg><span>Add Task</span></button>
        <button><svg class="ic-big"><use href="#calc"/></svg><span>Recalculate</span></button>
      </div>
      <div class="rcap">Edit</div>
    </section>
    <section class="rgroup g-open">
      <div class="rbtns"><button disabled><svg class="ic-big"><use href="#openrel"/></svg><span>Open Related<br>Record</span></button></div>
      <div class="rcap">Open Related Record</div>
    </section>
    <section class="rgroup g-view">
      <div class="rbtns">
        <button><svg class="ic-big"><use href="#itincal"/></svg><span>Itinerary<br>Calendar</span></button>
        <button><svg class="ic-big"><use href="#refresh"/></svg><span>Refresh</span></button>
        <button><svg class="ic-big"><use href="#audit"/></svg><span>Audit<br>Log</span></button>
        <button><svg class="ic-big"><use href="#report"/></svg><span>Reports</span></button>
      </div>
      <div class="rcap">View</div>
    </section>
    <section class="rgroup g-nav">
      <div class="rbtns">
        <button><svg class="ic-big"><use href="#find"/></svg><span>Find</span></button>
        <button><svg class="ic-big"><use href="#first"/></svg><span>First</span></button>
        <button><svg class="ic-big"><use href="#prev"/></svg><span>Previous</span></button>
        <button><svg class="ic-big"><use href="#next"/></svg><span>Next</span></button>
        <button><svg class="ic-big"><use href="#last"/></svg><span>Last</span></button>
        <button><svg class="ic-big"><use href="#hash"/></svg><span>By Booking #<br><i class="caret"></i></span></button>
      </div>
      <div class="rcap">Records Navigation</div>
    </section>
    <section class="rgroup g-close">
      <div class="rbtns"><button><svg class="ic-big"><use href="#closex"/></svg><span>Close</span></button></div>
      <div class="rcap">Close</div>
    </section>
  </div>

  <div class="d-flex flex-grow-1">
    <nav class="side d-flex flex-column">
      <div class="side-title d-flex align-items-center justify-content-between"><span>My Workplace</span><svg width="7" height="10"><path d="M6 1L1.500 5 6 9" fill="none" stroke="#666" stroke-width="1.600"/></svg></div>
      <a href="#" class="side-item d-flex align-items-center"><svg class="ic"><use href="#personinfo"/></svg>My Details</a>
      <a href="#" class="side-item d-flex align-items-center"><svg class="ic"><use href="#tasklist"/></svg>Task List</a>
      <a href="#" class="side-item d-flex align-items-center"><svg class="ic"><use href="#venuecal"/></svg>Venue Calendar</a>
      <a href="#" class="side-item active d-flex align-items-center"><svg class="ic"><use href="#doclist"/></svg>Event List</a>
      <div class="side-split dots mt-auto"><i></i><i></i><i></i><i></i><i></i><i></i></div>
      <a href="#" class="side-nav active d-flex align-items-center"><svg class="ic"><use href="#house"/></svg>My Workplace</a>
      <a href="#" class="side-nav d-flex align-items-center"><svg class="ic"><use href="#pin"/></svg>Events</a>
      <a href="#" class="side-nav d-flex align-items-center"><svg class="ic"><use href="#bed"/></svg>Lodging</a>
      <a href="#" class="side-nav d-flex align-items-center"><svg class="ic"><use href="#factory"/></svg>Facilities</a>
      <a href="#" class="side-nav d-flex align-items-center"><svg class="ic"><use href="#crm"/></svg>CRM/Sales</a>
      <div class="side-foot d-flex align-items-center">
        <button aria-label="Communications"><svg class="ic"><use href="#chat"/></svg></button>
        <button aria-label="Tasks"><svg class="ic"><use href="#task"/></svg></button>
        <button aria-label="Financial"><svg class="ic"><use href="#calcg"/></svg></button>
        <button aria-label="More" class="ms-1"><svg width="8" height="8" color="#666"><use href="#chev"/></svg></button>
      </div>
    </nav>

    <main class="doc flex-grow-1 d-flex flex-column">
      <div class="doc-strip d-flex align-items-center justify-content-between">
        <div class="doc-tab d-flex align-items-center"><svg class="ic"><use href="#pin"/></svg><span>884: Corporate Confere...</span><button class="ms-auto" aria-label="Close tab"><svg width="9" height="9"><path d="M1 1l7 7M8 1L1 8" stroke="#fff" stroke-width="1.600"/></svg></button></div>
        <button aria-label="Open documents" class="px-2"><i class="caret"></i></button>
      </div>
      <div class="pane flex-grow-1 d-flex flex-column">
        <fieldset class="evt">
          <legend><svg class="ic"><use href="#pin"/></svg>Event</legend>
          <div class="fields">
            <label for="f-book">Book #:</label><div class="fbox"><input id="f-book" class="text-end" value="884" readonly></div>
            <div class="vdots at-3"><i></i><i></i><i></i><i></i></div>
            <label for="f-name">Event Name:*</label><div class="fbox"><input id="f-name" value="Corporate Conference" readonly></div>
            <div class="vdots at-6"><i></i><i></i><i></i><i></i></div>
            <label for="f-date">Date Range:</label><div class="fbox"><input id="f-date" value="Wed Jul 14 2021" readonly></div>
            <div class="vdots at-9"><i></i><i></i><i></i><i></i></div>
            <label for="f-con">Contract Status:</label><div class="fbox bg-wait"><select id="f-con"><option>Waiting</option></select><button aria-label="Open contract status"><svg width="8" height="8" color="#b4b4b4"><use href="#chev"/></svg></button></div>
            <div class="vdots at-12"><i></i><i></i><i></i><i></i></div>
            <label for="f-sta">Status:*</label><div class="fbox bg-tent"><input id="f-sta" value="Tentative"><button aria-label="Look up status"><svg width="14" height="14"><use href="#lookup"/></svg></button></div>
            <span></span><span></span>
            <label for="f-cli">Client:*</label><div class="fbox"><input id="f-cli" value="Aquatz Incorporated" readonly><button aria-label="Look up client"><svg width="14" height="14"><use href="#lookup"/></svg></button></div>
            <label for="f-mgr">Event Manager:*</label><div class="fbox bg-rjv"><input id="f-mgr" value="RJV"><button aria-label="Look up manager"><svg width="14" height="14"><use href="#lookup"/></svg></button></div>
            <label for="f-dep">Deposit Status:</label><div class="fbox bg-wait"><select id="f-dep"><option>Waiting</option></select><button aria-label="Open deposit status"><svg width="8" height="8" color="#b4b4b4"><use href="#chev"/></svg></button></div>
            <label for="f-lck">Lock Level:</label><div class="fbox bg-open"><input id="f-lck" value="Open" readonly></div>
          </div>
        </fieldset>

        <div class="tabs tabs-1">
          <button class="active"><svg class="ic"><use href="#detail"/></svg>Event Detail</button>
          <button><svg class="ic"><use href="#crm"/></svg>Contacts</button>
          <button><svg class="ic" color="#f00"><use href="#badgeic"/></svg>Attendees</button>
          <button><svg class="ic" color="#4a55ff"><use href="#badgeic"/></svg>Exhibitors</button>
          <button><svg class="ic"><use href="#bed"/></svg>Lodging</button>
          <button><svg class="ic"><use href="#bed"/></svg>Accommodations</button>
          <button><svg class="ic"><use href="#plane"/></svg>Travel</button>
          <button><svg class="ic"><use href="#calcg"/></svg>Financial</button>
          <button><svg class="ic"><use href="#chat"/></svg>Communications</button>
          <button><svg class="ic"><use href="#task"/></svg>Tasks</button>
          <button><svg class="ic"><use href="#docclip"/></svg>Documents</button>
          <button><svg class="ic"><use href="#tpls"/></svg>Letter Templates</button>
          <button><svg class="ic"><use href="#pic"/></svg>Images</button>
        </div>
        <div class="frame frame-a flex-grow-1 d-flex flex-column">
          <div class="tabs tabs-2">
            <button class="active"><svg class="ic"><use href="#building"/></svg>Booked Locations</button>
            <button><svg class="ic"><use href="#itin"/></svg>Itinerary</button>
            <button><svg class="ic"><use href="#staff"/></svg>Staffing</button>
            <button><svg class="ic"><use href="#sack"/></svg>Miscellaneous</button>
            <button><svg class="ic"><use href="#book"/></svg>All Resources</button>
          </div>
          <div class="frame frame-b flex-grow-1 d-flex flex-column">
            <div class="tools-bar">
              <button aria-label="New"><svg class="ic"><use href="#newdoc"/></svg></button>
              <button aria-label="Facility"><svg class="ic"><use href="#calcd"/></svg></button>
              <button aria-label="Package"><svg class="ic"><use href="#cubes"/></svg></button>
              <span class="vsep"></span>
              <button aria-label="Save" disabled><svg class="ic"><use href="#saveg"/></svg></button>
              <button aria-label="Undo" disabled><svg class="ic"><use href="#undo"/></svg></button>
              <span class="vsep"></span>
              <button aria-label="Edit"><svg class="ic"><use href="#pencil"/></svg></button>
              <button aria-label="Status" class="drop"><svg class="ic"><use href="#info"/></svg><i class="caret"></i></button>
              <button aria-label="Add resource"><svg class="ic"><use href="#bookplus"/></svg></button>
              <button aria-label="Copy resource"><svg class="ic"><use href="#bookcopy"/></svg></button>
              <button aria-label="Add resource set"><svg class="ic"><use href="#bookblue"/></svg></button>
              <button aria-label="Add itinerary"><svg class="ic"><use href="#itinplus"/></svg></button>
              <button aria-label="Agreement"><svg class="ic"><use href="#hands"/></svg></button>
              <button aria-label="Tag"><svg class="ic"><use href="#tag"/></svg></button>
              <button aria-label="Email"><svg class="ic"><use href="#mails"/></svg></button>
              <button aria-label="Note"><svg class="ic"><use href="#note"/></svg></button>
              <button aria-label="Links" class="drop"><svg class="ic"><use href="#share"/></svg><i class="caret"></i></button>
              <button aria-label="Recalculate"><svg class="ic"><use href="#calcs"/></svg></button>
              <button aria-label="Delete"><svg class="ic"><use href="#redx"/></svg></button>
              <span class="vsep"></span>
              <button aria-label="Open related" disabled><svg class="ic"><use href="#openrel"/></svg></button>
              <span class="vsep"></span>
              <button aria-label="Layouts" class="drop"><svg class="ic"><use href="#coltable"/></svg><i class="caret"></i></button>
              <button aria-label="Reset view"><svg class="ic"><use href="#winarrow"/></svg></button>
              <button aria-label="Help"><svg class="ic"><use href="#helpbook"/></svg></button>
              <button aria-label="Detail pane"><svg class="ic"><use href="#panes"/></svg></button>
              <span class="vsep"></span>
              <button aria-label="Reports"><svg class="ic"><use href="#report"/></svg></button>
              <span class="vsep"></span>
              <button aria-label="Move up" disabled><svg class="ic"><use href="#upg"/></svg></button>
              <button aria-label="Move down"><svg class="ic"><use href="#downg"/></svg></button>
              <span class="vsep"></span>
              <button aria-label="Filter" class="drop"><svg class="ic"><use href="#filter"/></svg><i class="caret"></i></button>
              <span class="vsep"></span>
              <div class="find"><input aria-label="Search locations" placeholder="Text to search..."><button aria-label="Search"><svg width="14" height="14"><use href="#mag"/></svg></button></div>
              <span class="vsep"></span>
              <button aria-label="Export"><svg class="ic"><use href="#savedoc"/></svg></button>
              <button aria-label="Export options" class="drop-only"><i class="caret"></i></button>
              <span class="vsep"></span>
              <button aria-label="Print preview"><svg class="ic"><use href="#preview"/></svg></button>
            </div>

            <div class="frame-soft flex-grow-1 d-flex flex-column">
              <div class="frame flex-grow-1 d-flex flex-column">
                <table class="dgrid">
                  <colgroup><col width="19"><col width="67"><col width="87"><col width="67"><col width="99"><col width="109"><col width="177"><col width="126"><col width="183"><col width="106"><col width="88"><col width="91"><col></colgroup>
                  <thead><tr><th></th><th>Status</th><th># Conflicts</th><th>Conflict</th><th>Has Conflicts</th><th>Location Name</th><th><span class="d-flex justify-content-between align-items-center">Booked From <i class="up"></i></span></th><th>Function From/To</th><th>Booked To</th><th>Setup Type</th><th>Description</th><th>Attendance</th><th>Net Charge Inc Tax</th></tr></thead>
                  <tbody>
                    <tr class="sel"><td><i class="cur"></i></td><td class="c-tent">Tentative</td><td class="text-end">0</td><td class="c-none">None</td><td><input type="checkbox" class="mx-auto" aria-label="Ballroom A has conflicts"></td><td>Ballroom A</td><td class="c-white">Wed Jul 14 2021 @ 8:00 AM</td><td>9:00 AM-4:00 PM</td><td>Wed Jul 14 2021 @ 5:00 PM</td><td>Classroom</td><td>Conference</td><td class="text-end">200</td><td class="text-end">$1,087.90</td></tr>
                    <tr class="alt"><td></td><td class="c-tent">Tentative</td><td class="text-end">0</td><td class="c-none">None</td><td><input type="checkbox" class="mx-auto" aria-label="Ballroom B has conflicts"></td><td>Ballroom B</td><td>Wed Jul 14 2021 @ 4:00 PM</td><td>6:00 PM-9:00 PM</td><td>Wed Jul 14 2021 @ 11:00 PM</td><td>Banquet-Served</td><td>Dinner</td><td class="text-end">220</td><td class="text-end">$1,040.60</td></tr>
                  </tbody>
                </table>
                <div class="grid-foot mt-auto"><output class="u-count">2</output><output class="u-total">$2,128.50</output></div>
              </div>
              <div class="split-h dots"><i></i><i></i><i></i><i></i><i></i></div>

              <div class="lower">
                <div class="tabs tabs-3">
                  <button class="active"><svg class="ic"><use href="#tableic"/></svg>Setup</button>
                  <button><svg class="ic"><use href="#staff"/></svg>Staffing</button>
                  <button><svg class="ic"><use href="#cutlery"/></svg>Catering</button>
                  <button><svg class="ic"><use href="#cocktail"/></svg>Beverages</button>
                  <button><svg class="ic"><use href="#boxic"/></svg>Packages</button>
                  <button><svg class="ic"><use href="#itin"/></svg>Itinerary</button>
                  <button><svg class="ic"><use href="#notesic"/></svg>Notes</button>
                  <button><svg class="ic"><use href="#floor"/></svg>Floor Plans</button>
                  <button><svg class="ic"><use href="#pic"/></svg>Images</button>
                </div>
                <div class="frame frame-c">
                  <div class="tools-bar">
                    <button aria-label="New item"><svg class="ic"><use href="#newdoc"/></svg></button>
                    <button aria-label="Add package"><svg class="ic"><use href="#cubes"/></svg></button>
                    <span class="vsep"></span>
                    <button aria-label="Edit item"><svg class="ic"><use href="#docedit"/></svg></button>
                    <button aria-label="Recalculate items"><svg class="ic"><use href="#calcs"/></svg></button>
                    <button aria-label="Delete item"><svg class="ic"><use href="#redx"/></svg></button>
                    <span class="vsep"></span>
                    <button aria-label="Open related item" disabled><svg class="ic"><use href="#openrel"/></svg></button>
                    <span class="vsep"></span>
                    <button aria-label="Item layouts" class="drop"><svg class="ic"><use href="#coltable"/></svg><i class="caret"></i></button>
                    <button aria-label="Reset item view"><svg class="ic"><use href="#winarrow"/></svg></button>
                    <button aria-label="Item help"><svg class="ic"><use href="#helpbook"/></svg></button>
                    <button aria-label="Item detail pane"><svg class="ic"><use href="#panes"/></svg></button>
                    <span class="vsep"></span>
                    <button aria-label="Move item up" disabled><svg class="ic"><use href="#upg"/></svg></button>
                    <button aria-label="Move item down"><svg class="ic"><use href="#downg"/></svg></button>
                    <span class="vsep"></span>
                    <button aria-label="Filter items" class="drop"><svg class="ic"><use href="#filter"/></svg><i class="caret"></i></button>
                    <span class="vsep"></span>
                    <div class="find"><input aria-label="Search items" placeholder="Text to search..."><button aria-label="Search"><svg width="14" height="14"><use href="#mag"/></svg></button></div>
                    <span class="vsep"></span>
                    <button aria-label="Export items"><svg class="ic"><use href="#savedoc"/></svg></button>
                    <button aria-label="Item export options" class="drop-only"><i class="caret"></i></button>
                    <span class="vsep"></span>
                    <button aria-label="Item print preview"><svg class="ic"><use href="#preview"/></svg></button>
                  </div>
                  <div class="frame-soft"><div class="frame">
                    <div class="l-body">
                      <table class="dgrid">
                        <colgroup><col width="19"><col width="67"><col width="111"><col width="148"><col width="96"><col width="52"><col width="117"><col width="105"><col width="120"><col width="62"><col width="60"><col width="105"><col width="76"><col width="76"><col><col width="16"></colgroup>
                        <thead><tr><th></th><th>Item #<i class="up mb-1 me-0"></i></th><th>Financial Subgroup</th><th>Setup Item</th><th>Item Date</th><th>Billable</th><th>Required From Time</th><th>Required To Time</th><th>Use Owner Quantity</th><th>Quantity</th><th>Charge</th><th>Total Charge</th><th>Discount</th><th>Surcharge</th><th>Net Charge</th><th></th></tr></thead>
                        <tbody>
                          <tr class="hot"><td><i class="cur"></i></td><td class="text-end c-white">1</td><td class="c-evt">Event</td><td>Chair-Ergo</td><td>Wed Jul 14 2021</td><td><input type="checkbox" class="mx-auto" checked aria-label="Item 1 billable"></td><td>8:00 AM</td><td>5:00 PM</td><td><input type="checkbox" class="mx-auto" checked aria-label="Item 1 use owner quantity"></td><td class="text-end">200.00</td><td class="text-end">$3.50</td><td class="text-end">$700.00</td><td class="text-end">$0.00</td><td class="text-end">$0.00</td><td class="text-end border-end-0">$700.00</td>
                            <td class="scroll-cell" rowspan="3"><svg width="16" height="46"><path d="M4.500 11l3.500-4 3.500 4M4.500 35l3.500 4 3.500-4" fill="none" stroke="#777" stroke-width="1.800"/><path d="M3 18h10" stroke="#3a8c24" stroke-width="2"/></svg></td></tr>
                          <tr class="alt"><td></td><td class="text-end">2</td><td class="c-evt">Event</td><td>Table-Rct 8'</td><td>Wed Jul 14 2021</td><td><input type="checkbox" class="mx-auto" checked aria-label="Item 2 billable"></td><td>8:00 AM</td><td>5:00 PM</td><td><input type="checkbox" class="mx-auto" aria-label="Item 2 use owner quantity"></td><td class="text-end">50.00</td><td class="text-end">$8.50</td><td class="text-end">$425.00</td><td class="text-end">$0.00</td><td class="text-end">$0.00</td><td class="text-end border-end-0">$425.00</td></tr>
                          <tr class="third"><td></td><td></td><td class="c-evt"></td><td></td><td></td><td><input type="checkbox" class="mx-auto" aria-label="Item 3 billable"></td><td></td><td></td><td><input type="checkbox" class="mx-auto" aria-label="Item 3 use owner quantity"></td><td></td><td></td><td></td><td></td><td></td><td class="border-end-0"></td></tr>
                        </tbody>
                      </table>
                    </div>
                    <div class="grid-foot"><output class="l-count">17</output><output class="l-total">$20,165.50</output><output class="l-small">$0.00</output><output class="l-small">$0.00</output><output class="l-net">$20,165.50</output></div>
                  </div></div>
                </div>
              </div>
            </div>
          </div>
        </div>
      </div>
    </main>
  </div>
  <footer class="status d-flex align-items-end justify-content-end"><svg width="8" height="8"><path d="M6 0h2v2H6zM3 3h2v2H3zM6 3h2v2H6zM0 6h2v2H0zM3 6h2v2H3zM6 6h2v2H6z" fill="#a8c8e4"/></svg></footer>
</div>
<svg class="arrow" viewBox="0 0 132 100" aria-hidden="true"><path d="M2 4h6L111 77l7-8 14 25-34-3 7-8L2 8z" fill="#f00"/></svg>
<script src="https://cdn.jsdelivr.net/npm/bootstrap@5.3.0/dist/js/bootstrap.bundle.min.js"></script>
</body>
</html>
